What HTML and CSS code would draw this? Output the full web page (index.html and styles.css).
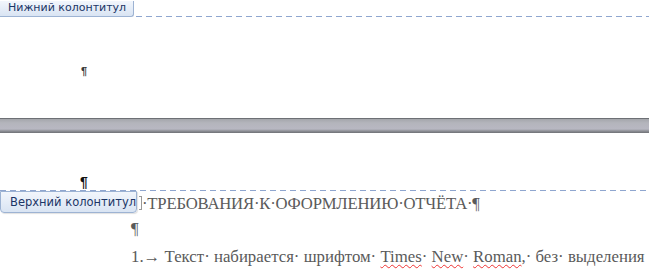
FILE: index.html
```html
<!DOCTYPE html>
<html>
<head>
<meta charset="utf-8">
<link rel="stylesheet" href="styles.css">
</head>
<body>
<div class="page-bottom">
  <div class="footer-row">
    <div class="tab tab-footer">Нижний колонтитул</div>
    <div class="dash dash-footer"></div>
  </div>
  <div class="footer-para"><span class="mark">¶</span></div>
</div>
<div class="gapbar"></div>
<div class="page-top">
  <div class="cursor-row"><span class="mark cursor-mark">¶</span></div>
  <div class="header-row">
    <div class="tab tab-header">Верхний колонтитул</div>
    <div class="title"><span class="bracket"></span>·ТРЕБОВАНИЯ·К·ОФОРМЛЕНИЮ·ОТЧЁТА·¶</div>
  </div>
  <div class="body">
    <div class="line">¶</div>
    <div class="line">1.→ Текст· набирается· шрифтом· <span class="sq">Times</span>· <span class="sq">New</span>· <span class="sq">Roman</span>,· без· выделения</div>
  </div>
</div>
</body>
</html>
```
FILE: styles.css
```css
html, body { margin: 0; padding: 0; background: #fff; overflow: hidden; }
body { width: 649px; height: 272px; font-family: "Liberation Serif", "DejaVu Serif", serif; }

.page-bottom { height: 118px; }
.footer-row { display: flex; align-items: flex-end; height: 17px; }
.tab {
  font-family: "DejaVu Sans", "Liberation Sans", sans-serif;
  font-size: 11px;
  color: #1b3566;
  background: linear-gradient(#f2f6fc, #d9e4f3);
  border: 1px solid #9db3d3;
  box-sizing: border-box;
  white-space: nowrap;
}
.tab-footer {
  width: 134px; height: 16px; line-height: 13px;
  padding-left: 8px;
  border-top: none; border-left: none;
  border-radius: 0 0 3px 0;
}
.dash {
  flex: 1;
  height: 1px;
  background: repeating-linear-gradient(90deg, #8fa6cf 0 6px, transparent 6px 10px);
}
.dash-footer { margin-left: 2px; }
.footer-para { padding: 44px 0 0 81px; }
.mark { font-family: "Liberation Sans", sans-serif; font-weight: bold; font-size: 11px; color: #3a3a3a; }

.gapbar {
  height: 15px;
  background: linear-gradient(#6d7075 0 1px, #a4a6ab 1px, #b4b5bc 5px, #b8b8c2 11px, #8e9096 13px, #6f7175 15px);
}

.page-top { height: 139px; }
.cursor-row { height: 57px; padding-left: 80px; display: flex; align-items: flex-end; }
.cursor-mark { font-size: 14px; line-height: 15px; color: #111; }
.header-row {
  display: flex;
  align-items: flex-start;
  background: repeating-linear-gradient(90deg, #8fa6cf 0 6px, transparent 6px 10px) top left / 100% 1px no-repeat;
}
.tab-header {
  margin-top: 1px;
  width: 137px; height: 22px; line-height: 20px;
  padding-left: 9px;
  font-size: 11.5px;
  border-radius: 0 0 4px 4px;
  box-shadow: 1px 1px 1px rgba(0,0,0,0.12);
}
.title {
  font-family: "Liberation Serif", "DejaVu Serif", serif;
  font-size: 16.7px;
  color: #5a5a5a;
  padding-top: 4px;
  padding-left: 2px;
  letter-spacing: -0.2px;
}
.bracket {
  display: inline-block; width: 2px; height: 12px;
  border: 1px solid #999; border-left: none;
  vertical-align: -1px;
}
.body {
  font-family: "Liberation Serif", "DejaVu Serif", serif;
  padding-left: 131px; padding-top: 1px;
  font-size: 16.8px; color: #5a5a5a;
}
.line { height: 28px; line-height: 28px; white-space: nowrap; }
.sq { text-decoration: underline wavy #e33; text-decoration-thickness: 1px; text-underline-offset: 2px; }
```
